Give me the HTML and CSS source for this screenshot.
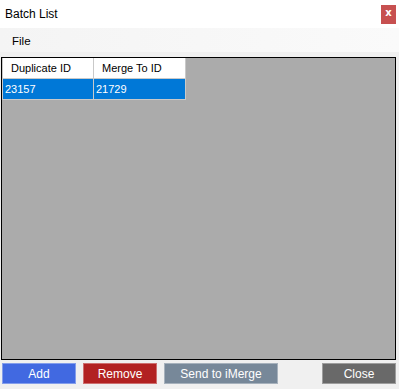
FILE: index.html
```html
<!DOCTYPE html>
<html lang="en">
<head>
  <meta charset="UTF-8">
  <meta name="viewport" content="width=device-width, initial-scale=1.0">
  <title>Batch List</title>
  <link rel="stylesheet" href="styles.css">
</head>
<body>
  <div class="window">
    <div class="titlebar">
      <span class="title">Batch List</span>
      <button class="close-x">x</button>
    </div>

    <div class="menubar">
      <span class="menu-item">File</span>
    </div>

    <div class="grid">
      <div class="table">
        <div class="cell head">Duplicate ID</div>
        <div class="cell head">Merge To ID</div>
        <div class="cell selected">23157</div>
        <div class="cell selected">21729</div>
      </div>
    </div>

    <div class="actions">
      <button class="btn btn-add">Add</button>
      <button class="btn btn-remove">Remove</button>
      <button class="btn btn-send">Send to iMerge</button>
      <button class="btn btn-close">Close</button>
    </div>
  </div>
</body>
</html>
```

FILE: styles.css
```css
body {
  margin: 0;
  padding: 0;
  background-color: #f0f0f0;
  font-family: "Liberation Sans", Arial, sans-serif;
  color: #000;
}

.window {
  width: 399px;
  height: 389px;
  display: flex;
  flex-direction: column;
}

/* Barra de título */
.titlebar {
  height: 28px;
  background-color: #fff;
  display: flex;
  justify-content: space-between;
  align-items: flex-start;
  padding-left: 5px;
  box-sizing: border-box;
}

.title {
  font-size: 12px;
  line-height: 14px;
  margin-top: 7px;
}

.close-x {
  width: 15px;
  height: 19px;
  margin: 5px 3px 0 0;
  padding: 0 0 3px 0;
  border: none;
  background-color: #c75050;
  color: #fff;
  font-family: "DejaVu Sans", sans-serif;
  font-weight: bold;
  font-size: 10px;
  line-height: 10px;
}

/* Menú */
.menubar {
  height: 24px;
  background: linear-gradient(to right, #f4f4f4, #fafafa);
  display: flex;
  align-items: center;
  padding-left: 12px;
}

.menu-item {
  font-size: 11.5px;
  margin-top: 1px;
}

/* Rejilla de datos */
.grid {
  height: 303px;
  margin: 5px 3px 0 1px;
  border: 1px solid #000;
  box-sizing: border-box;
  background-color: #ababab;
}

.table {
  display: inline-grid;
  grid-template-columns: 90px 91px;
  grid-auto-rows: 20px;
  gap: 1px;
  padding: 0 1px 1px 1px;
  background-color: #c9c9c9;
}

.cell {
  font-size: 11px;
  line-height: 20px;
  padding-left: 3px;
  white-space: nowrap;
}

.head {
  background-color: #fff;
  padding-left: 8px;
}

.selected {
  background-color: #0078d7;
  color: #fff;
  padding-left: 2px;
}

/* Botones */
.actions {
  display: flex;
  gap: 7px;
  margin: 3px 3px 0 2px;
}

.btn {
  height: 21px;
  width: 74px;
  padding: 0;
  border: 1px solid rgba(255, 255, 255, 0.35);
  color: #fff;
  font-family: "Liberation Sans", Arial, sans-serif;
  font-size: 12px;
  cursor: pointer;
}

.btn-add {
  background-color: #4169e1;
}

.btn-remove {
  background-color: #b22222;
}

.btn-send {
  width: 114px;
  background-color: #778899;
}

.btn-close {
  margin-left: auto;
  background-color: #696969;
}
```
